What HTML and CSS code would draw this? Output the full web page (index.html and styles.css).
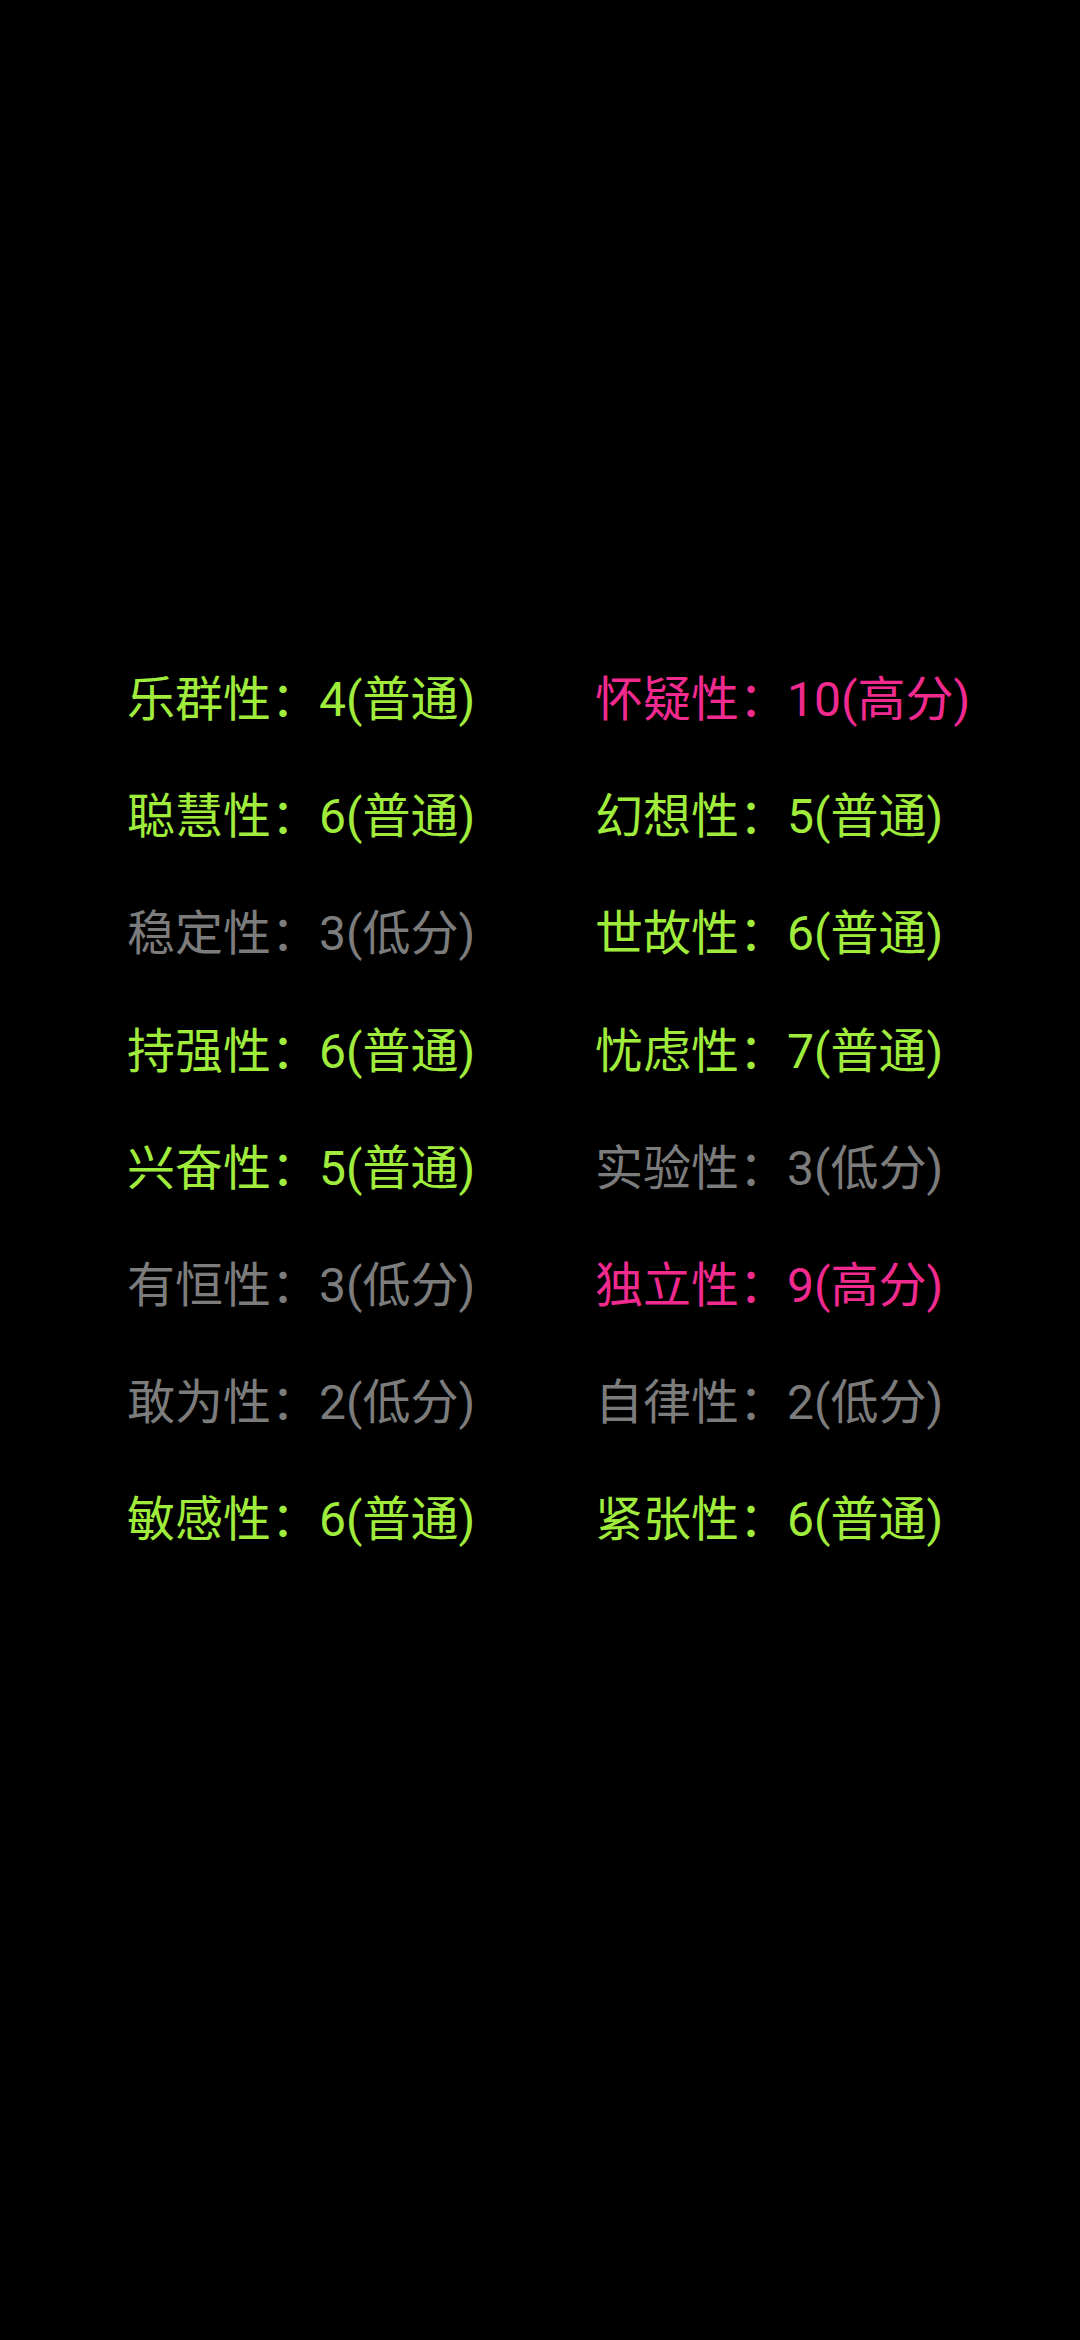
FILE: index.html
```html
<!DOCTYPE html>
<html lang="zh-CN">
<head>
<meta charset="utf-8">
<title>性格因素</title>
<link rel="stylesheet" href="styles.css">
</head>
<body>
<div class="grid">
  <div class="item mid">乐群性：4(普通)</div>
  <div class="item high">怀疑性：10(高分)</div>
  <div class="item mid">聪慧性：6(普通)</div>
  <div class="item mid">幻想性：5(普通)</div>
  <div class="item low">稳定性：3(低分)</div>
  <div class="item mid">世故性：6(普通)</div>
  <div class="item mid">持强性：6(普通)</div>
  <div class="item mid">忧虑性：7(普通)</div>
  <div class="item mid">兴奋性：5(普通)</div>
  <div class="item low">实验性：3(低分)</div>
  <div class="item low">有恒性：3(低分)</div>
  <div class="item high">独立性：9(高分)</div>
  <div class="item low">敢为性：2(低分)</div>
  <div class="item low">自律性：2(低分)</div>
  <div class="item mid">敏感性：6(普通)</div>
  <div class="item mid">紧张性：6(普通)</div>
</div>
</body>
</html>
```
FILE: styles.css
```css
html, body {
  margin: 0;
  padding: 0;
  background: #000;
}
body {
  width: 1080px;
  height: 2340px;
  font-family: Roboto, "Noto Sans CJK SC", sans-serif;
}
.grid {
  display: grid;
  grid-template-columns: 468px 1fr;
  grid-auto-rows: 117.2px;
  padding: 641px 0 0 127px;
}
.item {
  font-size: 48px;
  line-height: 117.2px;
  white-space: nowrap;
}
.mid { color: #a0ec3c; }
.high { color: #f02a8e; }
.low { color: #7c7c7c; }
```
